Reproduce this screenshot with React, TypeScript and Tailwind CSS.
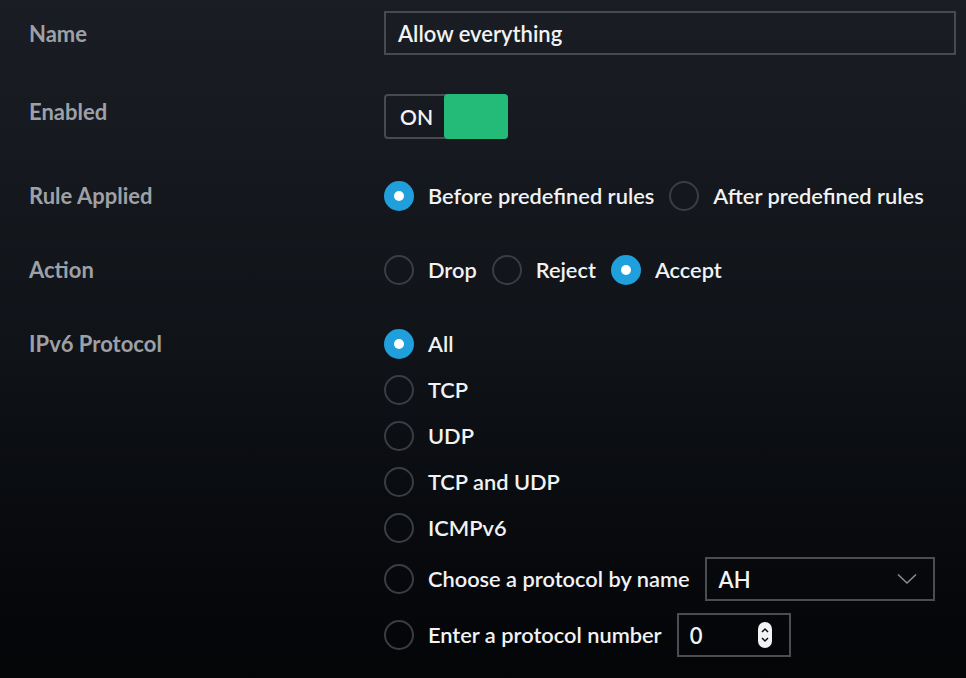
import { ReactNode } from "react"

function Radio({ checked }: { checked?: boolean }) {
  if (checked) {
    return (
      <span className="flex h-[30px] w-[30px] shrink-0 items-center justify-center rounded-full bg-[#1f9fdc]">
        <span className="h-[10px] w-[10px] rounded-full bg-white" />
      </span>
    )
  }
  return <span className="h-[30px] w-[30px] shrink-0 rounded-full border-2 border-[#3a3e44]" />
}

function Option({ label, checked, children }: { label: string; checked?: boolean; children?: ReactNode }) {
  return (
    <div className="flex items-center">
      <Radio checked={checked} />
      <span className="ml-[14px] text-[21.8px] leading-[30px] font-semibold text-[#f1f2f3]">{label}</span>
      {children}
    </div>
  )
}

function Row({ label, children, className, labelClass }: { label: string; children: ReactNode; className?: string; labelClass?: string }) {
  return (
    <div className={"flex " + (className ?? "")}>
      <div className={"w-[384px] shrink-0 pl-[29px] text-[22px] leading-[30px] font-bold text-[#9da1a7] " + (labelClass ?? "")}>{label}</div>
      <div className="flex-1">{children}</div>
    </div>
  )
}

export default function App() {
  return (
    <div
      className="h-[678px] w-[966px] overflow-hidden bg-gradient-to-b from-[#1a1d23] via-[#101318] to-[#040507] pt-[11px]"
      style={{ fontFamily: "Lato, 'Open Sans', sans-serif" }}
    >
      <Row label="Name" className="items-center" labelClass="pt-[2px]">
        <div className="flex h-[44px] w-[572px] items-center border-2 border-[#474b51] pl-[12px] text-[22px] font-semibold text-[#f2f3f4]">
          Allow everything
        </div>
      </Row>

      <Row label="Enabled" className="mt-[39px] items-start" labelClass="pt-[3px]">
        <div className="flex h-[45px] w-[124px] rounded-[4px] border-2 border-[#474b51]">
          <span className="flex w-[58px] items-center pl-[14px] text-[21px] font-semibold text-[#f2f3f4]">ON</span>
          <span className="-my-[2px] -mr-[2px] flex-1 rounded-[4px] bg-[#24bb78]" />
        </div>
      </Row>

      <Row label="Rule Applied" className="mt-[42px] items-center">
        <div className="flex items-center gap-[15px]">
          <Option label="Before predefined rules" checked />
          <Option label="After predefined rules" />
        </div>
      </Row>

      <Row label="Action" className="mt-[44px] items-center">
        <div className="flex items-center gap-[15px]">
          <Option label="Drop" />
          <Option label="Reject" />
          <Option label="Accept" checked />
        </div>
      </Row>

      <Row label="IPv6 Protocol" className="mt-[44px] items-start">
        <div className="flex flex-col gap-[16px]">
          <Option label="All" checked />
          <Option label="TCP" />
          <Option label="UDP" />
          <Option label="TCP and UDP" />
          <Option label="ICMPv6" />
        </div>
        <div className="mt-[14px] flex flex-col gap-[12px]">
          <Option label="Choose a protocol by name">
            <div className="ml-[15px] flex h-[44px] w-[230px] items-center justify-between border-2 border-[#4a4d52] pl-[12px] pr-[16px] text-[22px] font-semibold text-[#f2f3f4]">
              <span>AH</span>
              <svg width="20" height="12" viewBox="0 0 20 12" fill="none" stroke="#8b8f95" strokeWidth="1.5">
                <path d="M1 1.5 L10 10 L19 1.5" />
              </svg>
            </div>
          </Option>
          <Option label="Enter a protocol number">
            <div className="ml-[15px] flex h-[44px] w-[114px] items-center justify-between border-2 border-[#4a4d52] pl-[11px] pr-[17px] text-[22px] font-semibold text-[#f2f3f4]">
              <span>0</span>
              <svg width="14" height="26" viewBox="0 0 14 26">
                <rect x="0" y="0" width="14" height="26" rx="7" fill="#f2f3f4" />
                <path d="M4 10 L7 7 L10 10" fill="none" stroke="#111" strokeWidth="1.5" />
                <path d="M4 16 L7 19 L10 16" fill="none" stroke="#111" strokeWidth="1.5" />
              </svg>
            </div>
          </Option>
        </div>
      </Row>
    </div>
  )
}
